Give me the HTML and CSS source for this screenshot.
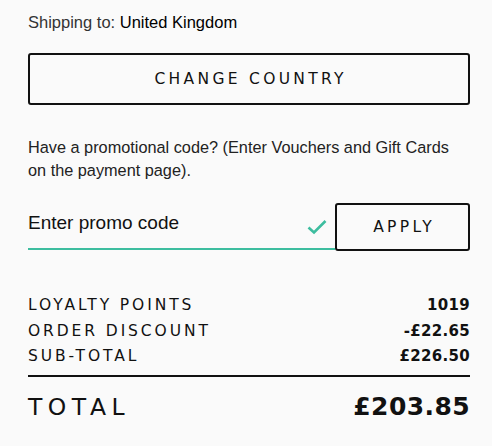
FILE: index.html
```html
<!DOCTYPE html>
<html lang="en">
<head>
  <meta charset="UTF-8">
  <meta name="viewport" content="width=device-width, initial-scale=1.0">
  <title>Basket Summary</title>
  <link rel="stylesheet" href="styles.css">
</head>
<body>
  <div class="summary">
    <p class="shipping">Shipping to: <span class="country">United Kingdom</span></p>

    <button class="outline-btn change-btn">Change Country</button>

    <p class="promo-note">Have a promotional code? (Enter Vouchers and Gift Cards on the payment page).</p>

    <form class="promo-form">
      <label class="promo-field">
        <input type="text" placeholder="Enter promo code">
        <svg class="check" width="20" height="16" viewBox="0 0 20 16">
          <path d="M1.5 8.5 L7 13.5 L18.5 2" fill="none" stroke="#3dbd9f" stroke-width="2.6"/>
        </svg>
      </label>
      <button type="button" class="outline-btn apply-btn">Apply</button>
    </form>

    <div class="totals">
      <div class="row"><span>Loyalty Points</span><b>1019</b></div>
      <div class="row"><span>Order Discount</span><b>-£22.65</b></div>
      <div class="row"><span>Sub-Total</span><b>£226.50</b></div>
    </div>

    <div class="row grand-total"><span>Total</span><b>£203.85</b></div>
  </div>
</body>
</html>
```

FILE: styles.css
```css
* {
  margin: 0;
  padding: 0;
  box-sizing: border-box;
}

body {
  background: #fafafa;
  font-family: 'Liberation Sans', Arial, sans-serif;
  color: #111;
}

.summary {
  padding: 11px 22px 0 28px;
}

.shipping {
  font-size: 16.5px;
  line-height: 22px;
  color: #333;
}

.country {
  color: #000;
}

.outline-btn {
  display: block;
  background: transparent;
  border: 2px solid #111;
  border-radius: 3px;
  font-family: 'DejaVu Sans', sans-serif;
  font-size: 15.5px;
  letter-spacing: 3.3px;
  text-indent: 3.3px;
  text-transform: uppercase;
  color: #111;
  cursor: pointer;
}

.change-btn {
  width: 100%;
  height: 52px;
  margin-top: 20px;
}

.promo-note {
  margin-top: 31px;
  font-size: 16.3px;
  line-height: 22.5px;
  color: #222;
}

.promo-form {
  display: flex;
  margin-top: 22px;
}

.promo-field {
  flex: 1;
  display: flex;
  align-items: center;
  border-bottom: 2px solid #3dbd9f;
  margin-bottom: 1px;
}

.promo-field input {
  flex: 1;
  min-width: 0;
  border: none;
  background: transparent;
  outline: none;
  font-family: 'Liberation Sans', Arial, sans-serif;
  font-size: 19px;
  color: #111;
  padding-bottom: 6px;
}

.promo-field input::placeholder {
  color: #111;
}

.check {
  margin-right: 8px;
  margin-top: 2px;
}

.apply-btn {
  width: 135px;
  height: 48px;
}

.totals {
  margin-top: 42px;
  padding-bottom: 5px;
  border-bottom: 2px solid #111;
}

.row {
  display: flex;
  justify-content: space-between;
  align-items: baseline;
  font-family: 'DejaVu Sans', sans-serif;
  font-size: 15.5px;
  line-height: 25.5px;
  text-transform: uppercase;
  letter-spacing: 2.9px;
}

.row b {
  font-size: 15px;
  letter-spacing: 0.3px;
}

.grand-total {
  margin-top: 12px;
  font-size: 23.5px;
  line-height: 36px;
  letter-spacing: 5.5px;
}

.grand-total b {
  font-size: 25px;
  letter-spacing: 0.4px;
}
```
